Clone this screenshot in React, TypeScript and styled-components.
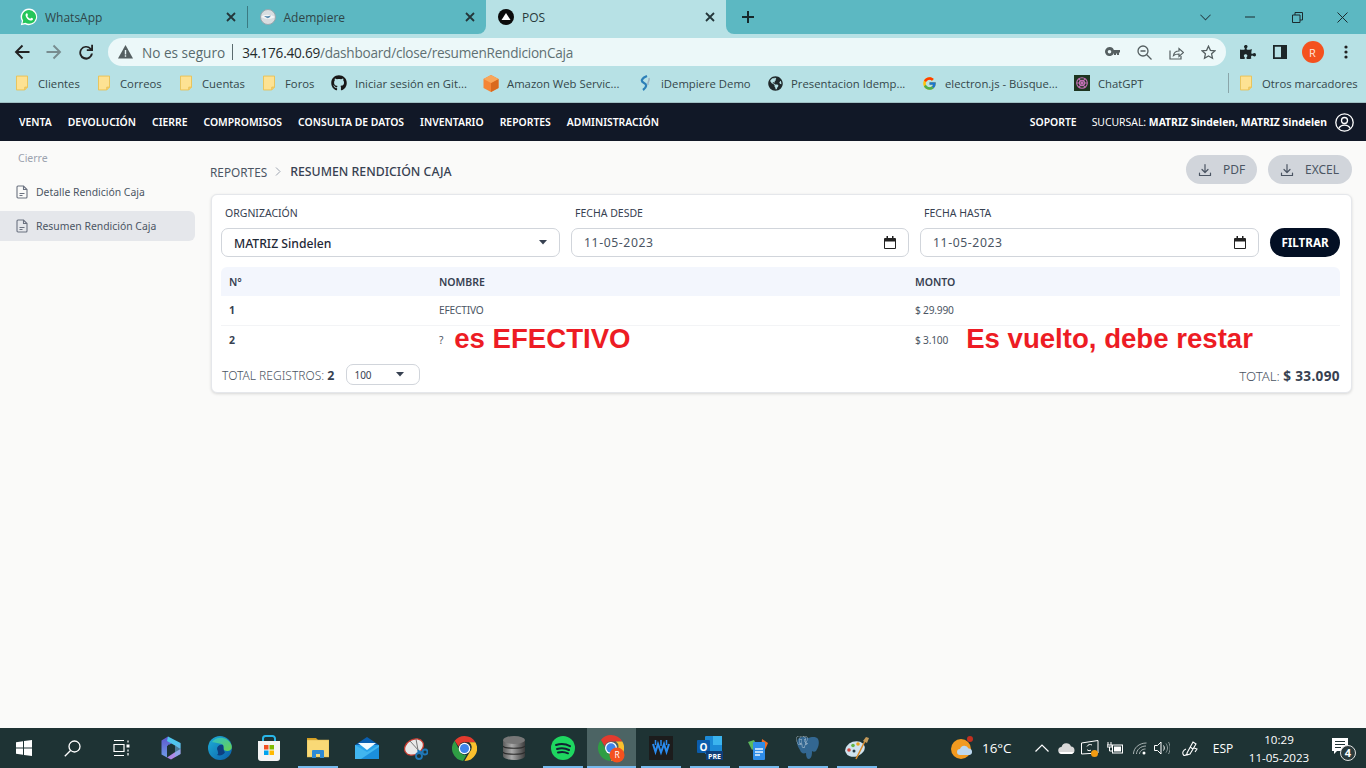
import React from "react";
import styled, { createGlobalStyle } from "styled-components";
import { FaGithub, FaGlobeAmericas, FaPuzzlePiece } from "react-icons/fa";
import { FcGoogle } from "react-icons/fc";
import { SiPostgresql } from "react-icons/si";

const Global = createGlobalStyle`
  html, body { margin: 0; padding: 0; width: 1366px; height: 768px; overflow: hidden; background: #fafaf9; }
  * { box-sizing: border-box; }
  #root { width: 1366px; height: 768px; }
`;

const Screen = styled.div`
  width: 1366px; height: 768px; display: flex; flex-direction: column;
  font-family: "Noto Sans", "Open Sans", sans-serif;
`;

/* ---------- browser chrome ---------- */
const TabStrip = styled.div`
  height: 34px; display: flex; background: #b7e1e5; flex: none;
`;
const TabsBack = styled.div`
  width: 486px; background: #5cb8c2; border-bottom-right-radius: 8px; display: flex; padding-left: 8px;
`;
const Tab = styled.div<{ $gap: number }>`
  width: 239px; height: 34px; display: flex; align-items: center; padding: 0 11px 0 12px; gap: ${(p) => p.$gap}px;
  font: 12px "Open Sans", sans-serif; color: #2f4548; position: relative;
`;
const TabTitle = styled.span`flex: 1;`;
const TabDivider = styled.div`width: 1px; height: 22px; margin-top: 6px; background: #3b7a82; flex: none;`;
const ActiveTab = styled(Tab)`
  width: 240px; flex: none; background: #b7e1e5; border-radius: 8px 8px 0 0; padding: 0 11px 0 12px; color: #27393b;
`;
const StripRest = styled.div`
  flex: 1; background: #5cb8c2; border-bottom-left-radius: 8px; display: flex; align-items: center;
  padding-left: 15px; position: relative;
`;
const WinButtons = styled.div`
  margin-left: auto; display: flex; align-items: center; height: 28px;
`;
const WinBtn = styled.div<{ $w: number }>`
  width: ${(p) => p.$w}px; display: flex; justify-content: center; align-items: center; height: 28px;
`;

const Toolbar = styled.div`
  height: 32px; background: #b7e1e5; display: flex; align-items: flex-end; flex: none;
`;
const NavIcons = styled.div`
  display: flex; width: 108px; height: 28px; align-items: center; padding-left: 14px; gap: 16px;
`;
const Omnibox = styled.div`
  width: 1118px; height: 28px; background: #ecf8f9; border-radius: 14px; display: flex; align-items: center;
  padding-left: 10px; font: 13.6px "Open Sans", sans-serif; color: #586a6d; flex: none;
`;
const Insecure = styled.span`margin-left: 9px; white-space: nowrap;`;
const OmniSep = styled.span`width: 1px; height: 16px; background: #5b6b6e; margin: 0 9px 0 7px;`;
const Url = styled.span`white-space: nowrap; color: #5f7073; letter-spacing: -.24px;`;
const Host = styled.span`color: #1f2a2c;`;
const OmniActions = styled.div`margin-left: auto; display: flex; align-items: center; gap: 17px; padding-right: 10px;`;
const ExtIcons = styled.div`
  display: flex; align-items: center; height: 28px; margin-left: 5px;
`;
const ExtSlot = styled.div<{ $w: number }>`width: ${(p) => p.$w}px; display: flex; justify-content: center; align-items: center; flex: none;`;
const Avatar = styled.div`
  width: 22px; height: 22px; border-radius: 50%; background: #f4511e; color: #ffe5dc;
  font: 11px "Open Sans", sans-serif; display: flex; align-items: center; justify-content: center;
`;

const BookmarkBar = styled.div`
  height: 37px; background: #b7e1e5; border-bottom: 1px solid #9fbfc3; flex: none; display: flex; align-items: center;
  padding: 0 10px 2px 14px; font: 11.3px "Open Sans", sans-serif; color: #34474a;
`;
const Bookmark = styled.div<{ $w: number }>`
  width: ${(p) => p.$w}px; flex: none; display: flex; align-items: center; gap: 8px; white-space: nowrap;
`;
const BookmarkIcon = styled.div`width: 16px; height: 16px; flex: none; display: flex; justify-content: center; align-items: center;`;
const BookmarkSep = styled.div`width: 1px; height: 20px; background: #8aa5a9; margin: 0 9px 0 auto;`;

/* ---------- app nav ---------- */
const AppNav = styled.nav`
  height: 38px; background: #111827; flex: none; display: flex; align-items: center; padding: 0 12px 0 19px;
  color: #fff; font-size: 10.4px; font-weight: 600;
`;
const NavItem = styled.span`margin-right: 16px; white-space: nowrap;`;
const NavRight = styled.div`margin-left: auto; display: flex; align-items: center; gap: 15px;`;
const Branch = styled.span`font-weight: 400; white-space: nowrap; margin-right: -7px; b { font-weight: 700; }`;

/* ---------- page ---------- */
const Body = styled.div`flex: 1; display: flex; background: #fafaf9; min-height: 0;`;
const Sidebar = styled.aside`width: 195px; flex: none; padding-top: 10px; display: flex; flex-direction: column; gap: 4px;`;
const SideTitle = styled.div`
  height: 22px; padding-left: 18px; font-size: 10.5px; color: #9ca3af; line-height: 14px;
`;
const SideItem = styled.div<{ $active?: boolean }>`
  height: 30px; display: flex; align-items: center; gap: 8px; padding-left: 16px; font-size: 10.4px; color: #4b5563;
  background: ${(p) => (p.$active ? "#e5e7eb" : "transparent")};
  border-radius: 0 6px 6px 0; white-space: nowrap;
`;
const Main = styled.main`flex: 1; padding: 14px 14px 0 16px; min-width: 0;`;
const TitleRow = styled.div`display: flex; align-items: center; height: 29px; margin-bottom: 10px;`;
const Crumbs = styled.div`display: flex; align-items: center; font-size: 11.8px; color: #4b5563; white-space: nowrap; margin: 4px 0 0 -1px;`;
const CrumbCurrent = styled.span`font-size: 12.3px; font-weight: 500; color: #374151;`;
const CrumbSep = styled.span`margin: 0 9px 0 8px; display: flex;`;
const Actions = styled.div`margin-left: auto; display: flex; gap: 11px;`;
const GhostButton = styled.div<{ $w: number }>`
  width: ${(p) => p.$w}px; height: 29px; border-radius: 15px; background: #d1d5db; color: #4b5563; font-size: 12px;
  display: flex; align-items: center; padding-left: 12px; gap: 11px;
`;
const Card = styled.section`
  height: 199px; background: #fff; border: 1px solid #e5e7eb; border-radius: 6px;
  box-shadow: 0 1px 3px rgba(0,0,0,.14); padding: 0 11px 0 9px; display: flex; flex-direction: column;
`;
const Filters = styled.div`
  display: grid; grid-template-columns: 339px 338px 339px 70px; column-gap: 11px; height: 72px; align-items: end; flex: none; padding-bottom: 10px;
`;
const Field = styled.div`display: flex; flex-direction: column; min-width: 0;`;
const FieldLabel = styled.label`
  font-size: 10.5px; color: #374151; height: 15px; line-height: 15px; margin: 0 0 7px 4px; white-space: nowrap;
`;
const InputBox = styled.div`
  height: 29px; border: 1px solid #d1d5db; border-radius: 7px; background: #fff; display: flex; align-items: center;
  padding: 0 12px; font-size: 12.2px; color: #374151; justify-content: space-between;
`;
const SelectText = styled.span`font-size: 12.2px; font-weight: 500; color: #1f2937; padding-top: 1px;`;
const DateText = styled.span`letter-spacing: .6px; color: #4b5563;`;
const Filter = styled.div`
  height: 29px; border-radius: 15px; background: #030f24; color: #fff; font-size: 11.6px; font-weight: 700;
  display: flex; align-items: center; justify-content: center;
`;
const Table = styled.table`width: 100%; border-collapse: collapse; table-layout: fixed; flex: none;`;
const Th = styled.th<{ $w?: number }>`
  width: ${(p) => (p.$w ? `${p.$w}px` : "auto")}; height: 29px; background: #f3f6fd; text-align: left; padding: 0 0 0 8px;
  font-size: 10.5px; font-weight: 600; color: #374151;
  &:first-child { border-top-left-radius: 6px; } &:last-child { border-top-right-radius: 6px; }
`;
const Tr = styled.tr`border-bottom: 1px solid #f3f4f6; &:last-child { border-bottom: 0; }`;
const IdCell = styled.td`height: 29px; padding: 0 0 0 8px; font-size: 10.5px; font-weight: 700; color: #374151;`;
const Td = styled.td`height: 29px; padding: 0 0 0 8px; font-size: 10.2px; color: #4b5563;`;
const CellLine = styled.div`display: flex; align-items: center; height: 20px; white-space: nowrap; letter-spacing: -.2px;`;
const Note = styled.span<{ $gap: number }>`
  margin: -2px 0 0 ${(p) => p.$gap}px; font: bold 27.6px "Liberation Sans", Arial, sans-serif; color: #ed1c24; letter-spacing: 0;
`;
const Foot = styled.div`
  display: flex; align-items: center; height: 21px; margin-top: 10px; padding-left: 1px; font-size: 12px; color: #4b5563;
`;
const FootLabel = styled.span`padding-top: 1px; font-weight: 300;`;
const FootStrong = styled.b`font-weight: 700; color: #374151; font-size: 12.4px;`;
const PageSize = styled.div`
  width: 74px; height: 21px; border: 1px solid #d1d5db; border-radius: 7px; margin-left: 12px; display: flex; align-items: center;
  justify-content: space-between; padding: 0 15px 0 7px; font-size: 10px; color: #374151;
`;
const Total = styled.div`
  margin-left: auto; padding-top: 1px; font-weight: 300; font-size: 13.2px; color: #4b5563;
  b { font-weight: 700; color: #374151; font-size: 13.6px; letter-spacing: .35px; }
`;

/* ---------- taskbar ---------- */
const Taskbar = styled.footer`
  height: 40px; flex: none; background: #1e3334; display: flex; color: #fff; font: 12px "Open Sans", sans-serif; position: relative;
`;
const Slot = styled.div<{ $w?: number; $active?: boolean; $open?: boolean }>`
  width: ${(p) => p.$w ?? 49}px; height: 40px; flex: none; display: flex; align-items: center; justify-content: center; position: relative;
  background: ${(p) => (p.$active ? "#4c6464" : "transparent")};
  &::after {
    content: ""; display: ${(p) => (p.$open ? "block" : "none")}; position: absolute; bottom: 0; height: 2px;
    left: ${(p) => (p.$active ? 0 : 5)}px; right: ${(p) => (p.$active ? 0 : 4)}px; background: #76b9ed;
  }
`;
const Tray = styled.div`margin-left: auto; display: flex; align-items: center; height: 40px;`;
const TrayIcon = styled.div<{ $w: number }>`width: ${(p) => p.$w}px; display: flex; justify-content: center; align-items: center; height: 40px; flex: none;`;
const Weather = styled.span`font-size: 13.4px; width: 51px; white-space: nowrap; padding-left: 3px;`;
const Clock = styled.div`width: 82px; text-align: center; line-height: 18px; font-size: 11.6px; padding-top: 1px;`;

/* ---------- drawings ---------- */
const Folder = () => (
  <svg width="12" height="16" viewBox="0 0 13 16"><path d="M.5.5h12v12l-3 3H.5z" fill="#fde293" stroke="#e9c053" /><path d="M9.5 15.5v-3h3" fill="#f3cf6c" stroke="#e9c053" /></svg>
);
const DocIcon = () => (
  <svg width="12" height="14" viewBox="0 0 12 14" fill="none" stroke="#6b7280" strokeWidth="1.1"><path d="M1 2a1 1 0 0 1 1-1h5.500L11 4.500V12a1 1 0 0 1-1 1H2a1 1 0 0 1-1-1z" /><path d="M7.500 1v3.500H11M3.500 8.500h5M3.500 10.500h3" /></svg>
);
const Download = () => (
  <svg width="14" height="14" viewBox="0 0 14 14" fill="none" stroke="#4b5563" strokeWidth="1.2" strokeLinecap="round" strokeLinejoin="round"><path d="M7 1.500v7.500M4 6.500L7 9.500l3-3M1.500 10v2.500h11V10" /></svg>
);
const Caret = () => <svg width="8" height="5" viewBox="0 0 8 5"><path d="M0 0h8L4 4.500z" fill="#374151" /></svg>;
const Calendar = () => (
  <svg width="12" height="13" viewBox="0 0 12 13"><path d="M1 2h10a1 1 0 0 1 1 1v9a1 1 0 0 1-1 1H1a1 1 0 0 1-1-1V3a1 1 0 0 1 1-1zm0 3.500V12h10V5.500z" fill="#222" /><path d="M2.500 0h1.500v3H2.500zM8 0h1.500v3H8z" fill="#222" /></svg>
);
const CloseX = () => (
  <svg width="10" height="10" viewBox="0 0 10 10" stroke="#24363a" strokeWidth="1.8"><path d="M1 1l8 8M9 1l-8 8" /></svg>
);
const WhatsApp = () => (
  <svg width="18" height="18" viewBox="0 0 18 18">
    <path d="M9 .5a8.300 8.300 0 0 0-7.100 12.600L.8 17.300l4.300-1.100A8.300 8.300 0 1 0 9 .5z" fill="#fff" />
    <path d="M9 2a6.900 6.900 0 0 0-5.800 10.600l-.7 2.800 2.900-.7A6.900 6.900 0 1 0 9 2z" fill="#25c65a" />
    <path d="M6.600 5.200c-.9.500-1.200 1.500-.9 2.700.6 2.200 2.500 4 4.500 4.600 1.200.3 2.300-.1 2.700-1 .2-.4.200-.8.100-.9l-1.800-.9c-.2 0-.6.700-.9 1-.2.100-1.900-.7-3-2.500 0-.2.700-.8.700-1.100L7.200 5.300c-.1-.2-.4-.2-.6-.1z" fill="#fff" />
  </svg>
);
const AdempiereFav = () => (
  <svg width="16" height="16" viewBox="0 0 16 16">
    <circle cx="8" cy="8" r="7.500" fill="#d8dde0" /><path d="M1 8c3-3 9-3 14 0-3 2-8 3-14 0z" fill="#f3f5f6" />
    <path d="M4 7c2 0 4 .5 7-.5-1 2-3 3-4 2.500z" fill="#5b8cb0" /><circle cx="8" cy="8" r="7.500" fill="none" stroke="#9aa6ad" />
  </svg>
);
const PosFav = () => (
  <svg width="16" height="16" viewBox="0 0 16 16"><circle cx="8" cy="8" r="8" fill="#0b0b0b" /><path d="M8 4l4.500 7h-9z" fill="#fff" /></svg>
);
const Plus = () => (
  <svg width="14" height="14" viewBox="0 0 14 14" stroke="#16282b" strokeWidth="2"><path d="M7 1v12M1 7h12" /></svg>
);
const Back = ({ c = "#222" }: { c?: string }) => (
  <svg width="16" height="16" viewBox="0 0 16 16" fill="none" stroke={c} strokeWidth="1.9"><path d="M15.500 8H2M8.500 1.500L2 8l6.500 6.500" /></svg>
);
const Forward = () => (
  <svg width="16" height="16" viewBox="0 0 16 16" fill="none" stroke="#788c8f" strokeWidth="1.9"><path d="M.5 8H14M7.500 1.500L14 8l-6.500 6.500" /></svg>
);
const Reload = () => (
  <svg width="16" height="16" viewBox="0 0 16 16"><path d="M13.200 4.300V.8L15 .8V7H8.800V5.200h3.100A5 5 0 1 0 13 9.500h1.900A6.800 6.800 0 1 1 13.200 4.300z" fill="#222" /></svg>
);
const Warn = () => (
  <svg width="15" height="14" viewBox="0 0 15 14"><path d="M7.500 0L15 13.500H0z" fill="#555f61" /><path d="M6.800 5h1.400v4.500H6.800zM6.800 10.300h1.400v1.400H6.800z" fill="#ecf8f9" /></svg>
);
const KeyIcon = () => (
  <svg width="15" height="10" viewBox="0 0 15 10"><path d="M4.500 0a4.500 4.500 0 1 1-4.200 6 4.500 4.500 0 0 1 4.200-6zm0 3a1.800 1.800 0 1 0 0 3.600 1.800 1.800 0 0 0 0-3.600z" fill="#555f61" fillRule="evenodd" /><path d="M8 3h7v2.500h-1V8h-2V6.500h-1V8H9V5.500H8z" fill="#555f61" /></svg>
);
const ZoomOut = () => (
  <svg width="15" height="15" viewBox="0 0 15 15" fill="none" stroke="#555f61" strokeWidth="1.300"><circle cx="6" cy="6" r="5" /><path d="M9.800 9.800L14.500 14.500M3.500 6h5" /></svg>
);
const Share = () => (
  <svg width="15" height="15" viewBox="0 0 15 15" fill="none" stroke="#555f61" strokeWidth="1.200"><path d="M1 5.500V14h11v-3" /><path d="M4.500 10.500c.5-3 3-4.500 5.500-4.500V3.500l4.500 4-4.500 4V9c-2 0-4 .300-5.500 1.500z" /></svg>
);
const Star = () => (
  <svg width="15" height="15" viewBox="0 0 15 15" fill="none" stroke="#555f61" strokeWidth="1.300"><path d="M7.500 1.200l1.900 4.100 4.500.5-3.300 3 .9 4.500-4-2.300-4 2.300.9-4.500-3.300-3 4.500-.5z" /></svg>
);
const SidePanel = () => (
  <svg width="14" height="14" viewBox="0 0 14 14"><path d="M0 0h14v14H0zM1.800 1.800v10.400H8V1.800z" fill="#1c2628" fillRule="evenodd" /></svg>
);
const Dots = () => (
  <svg width="4" height="14" viewBox="0 0 4 14" fill="#222"><circle cx="2" cy="2" r="1.600" /><circle cx="2" cy="7" r="1.600" /><circle cx="2" cy="12" r="1.600" /></svg>
);
const Cube = () => (
  <svg width="16" height="17" viewBox="0 0 16 17"><path d="M8 0l7.500 4v9L8 17 .5 13V4z" fill="#f58536" /><path d="M8 8l7.500-4v9L8 17z" fill="#d9691e" /><path d="M8 0l7.500 4L8 8 .5 4z" fill="#f9a65a" /></svg>
);
const IDempiere = () => (
  <svg width="14" height="16" viewBox="0 0 14 16" fill="none"><path d="M9 1C4 3 2 6 6 8c3 1.500 3 4-1 7" stroke="#2c7fb8" strokeWidth="2.200" /><path d="M11 3c1 3-2 4-1 7" stroke="#9fb4c2" strokeWidth="1.600" /></svg>
);
const ChatGpt = () => (
  <svg width="16" height="16" viewBox="0 0 16 16"><rect width="16" height="16" fill="#1d3520" /><g fill="none" stroke="#c46fb5" strokeWidth="1.100"><circle cx="8" cy="8" r="5.300" /><circle cx="8" cy="8" r="2.600" /><path d="M5 3.500l6 9M11 3.500l-6 9M2.700 8h10.600" /></g></svg>
);
const UserCircle = () => (
  <svg width="19" height="19" viewBox="0 0 19 19" fill="none" stroke="#fff" strokeWidth="1.300"><circle cx="9.500" cy="9.500" r="8.700" /><circle cx="9.500" cy="7.500" r="3" /><path d="M3.800 15.500c1.200-2.500 3.500-3.300 5.700-3.300s4.500.8 5.700 3.300" /></svg>
);
const ChromeLogo = ({ size = 26 }: { size?: number }) => (
  <svg width={size} height={size} viewBox="0 0 26 26">
    <path d="M13 0a13 13 0 0 1 11.300 6.500H13a6.500 6.500 0 0 0-6.200 4.500L2.800 5A13 13 0 0 1 13 0z" fill="#e33b2e" />
    <path d="M24.300 6.500A13 13 0 0 1 13 26l5.600-9.700a6.500 6.500 0 0 0-.7-9.800z" fill="#fbc02d" />
    <path d="M2.800 5l5.600 11.300a6.500 6.500 0 0 0 6.800 3.300L11.500 25.900A13 13 0 0 1 2.800 5z" fill="#2f9e44" />
    <circle cx="13" cy="13" r="6" fill="#fff" /><circle cx="13" cy="13" r="4.700" fill="#3f84ea" />
  </svg>
);
const WinLogo = () => (
  <svg width="16" height="16" viewBox="0 0 16 16" fill="#fff"><path d="M0 2.200L7 1.200v6.300H0zM8 1L16 0v7.500H8zM0 8.500h7v6.300L0 13.800zM8 8.500h8V16L8 15z" /></svg>
);
const Search = () => (
  <svg width="17" height="17" viewBox="0 0 17 17" fill="none" stroke="#fff" strokeWidth="1.300"><circle cx="10.500" cy="6.500" r="5.500" /><path d="M6.500 10.500L.8 16.300" /></svg>
);
const TaskView = () => (
  <svg width="17" height="16" viewBox="0 0 17 16" fill="none" stroke="#fff" strokeWidth="1.200"><path d="M1 .5h10M1 15.500h10M1 4.500h10v7H1z" /><path d="M15 .5v2M15 13v2.500" /><rect x="13.500" y="4.500" width="3" height="3" fill="#fff" stroke="none" /><path d="M15 9.500v2" /></svg>
);
const Copilot = () => (
  <svg width="20" height="24" viewBox="0 0 20 24">
    <defs>
      <linearGradient id="cpa" x1="0" y1="0" x2="0" y2="1"><stop offset="0" stopColor="#5d55cf" /><stop offset="1" stopColor="#6f9be6" /></linearGradient>
      <linearGradient id="cpb" x1="0" y1="0" x2="1" y2="0"><stop offset="0" stopColor="#a680e2" /><stop offset="1" stopColor="#b995ea" /></linearGradient>
    </defs>
    <path d="M7 0.500L0.500 4.500v14L6 21.500V10l6-3.500z" fill="url(#cpa)" />
    <path d="M7 0.500L19.500 7v6L14 9.500 6 5z" fill="#4fc6ee" />
    <path d="M6 21.500L10 23.500l9.500-5.500V13l-6 3.500-7.500 5z" fill="url(#cpb)" />
    <path d="M19.500 7v11l-5.500 3V9.500z" fill="#6fb6ea" opacity=".55" />
    <path d="M7 8.500l7 3.500-7 3.800z" fill="#1e3334" />
  </svg>
);
const Edge = () => (
  <svg width="24" height="24" viewBox="0 0 24 24">
    <defs>
      <linearGradient id="eb" x1="0" y1="0" x2="1" y2="1"><stop offset="0" stopColor="#1fb0d8" /><stop offset="1" stopColor="#0a5da8" /></linearGradient>
      <linearGradient id="eg" x1="0" y1="0" x2="1" y2="1"><stop offset="0" stopColor="#2fc0c8" /><stop offset="1" stopColor="#6ad14e" /></linearGradient>
    </defs>
    <circle cx="12" cy="12" r="12" fill="url(#eb)" />
    <path d="M4 6c4-6 15-6 19 2 1.500 3 1 6.500-3 7-3 .3-5-1-4.500-3 .2-1.500 0-4-4-4.500C8 7 5 6 4 6z" fill="url(#eg)" />
    <path d="M9 13c0-3 3-5 6-4 1 2 0 6 2 7-1 3-5 4-8 3 2-1 1-3 0-6z" fill="#0d3f80" />
  </svg>
);
const Store = () => (
  <svg width="24" height="26" viewBox="0 0 24 26">
    <path d="M6 7V3.500A2.500 2.500 0 0 1 8.500 1h7A2.500 2.500 0 0 1 18 3.500V7" fill="none" stroke="#29b6e8" strokeWidth="2" />
    <path d="M1 6h22v17a3 3 0 0 1-3 3H4a3 3 0 0 1-3-3z" fill="#f4f4f4" />
    <rect x="7" y="10" width="4.500" height="4.500" fill="#f25022" /><rect x="12.500" y="10" width="4.500" height="4.500" fill="#7fba00" />
    <rect x="7" y="15.500" width="4.500" height="4.500" fill="#00a4ef" /><rect x="12.500" y="15.500" width="4.500" height="4.500" fill="#ffb900" />
  </svg>
);
const Explorer = () => (
  <svg width="22" height="20" viewBox="0 0 22 20">
    <path d="M0 0h9l2 2h0v6H0z" fill="#d49f22" /><rect y="2" width="22" height="17" fill="#f9d976" stroke="#e0b84f" strokeWidth=".5" />
    <path d="M5 20v-7a1 1 0 0 1 1-1h10a1 1 0 0 1 1 1v7h-4v-4H9v4z" fill="#2f8ad4" />
  </svg>
);
const Mail = () => (
  <svg width="24" height="22" viewBox="0 0 24 22">
    <path d="M12 0l12 8v2H0V8z" fill="#0a5fb0" /><rect y="8" width="24" height="14" fill="#29a3ea" />
    <path d="M0 8l12 7 12-7v14H0z" fill="#41b6f0" /><path d="M3 6h18l-9 7z" fill="#f2fbff" /><path d="M24 10v12H6z" fill="#1b8fdc" />
  </svg>
);
const Snip = () => (
  <svg width="24" height="24" viewBox="0 0 24 24">
    <ellipse cx="10" cy="11" rx="10" ry="7.500" transform="rotate(-30 10 11)" fill="#e9e9e9" stroke="#c2392f" strokeWidth="1.300" />
    <path d="M12 3l2 11M6 5l9 10" stroke="#777" strokeWidth="1" />
    <circle cx="15" cy="20" r="3" fill="none" stroke="#1f77b8" strokeWidth="1.800" /><circle cx="21" cy="16" r="2.500" fill="none" stroke="#1f77b8" strokeWidth="1.800" />
    <path d="M14 14l1 4M15 15l4 2" stroke="#1f77b8" strokeWidth="1.800" />
  </svg>
);
const Database = () => (
  <svg width="22" height="24" viewBox="0 0 22 24">
    <defs><linearGradient id="db" x1="0" x2="1" y1="0" y2="0"><stop offset="0" stopColor="#5b5b5b" /><stop offset=".4" stopColor="#aaa" /><stop offset="1" stopColor="#3c3c3c" /></linearGradient></defs>
    <path d="M0 4v16c0 2 5 4 11 4s11-2 11-4V4z" fill="url(#db)" /><ellipse cx="11" cy="4" rx="11" ry="4" fill="#777" />
    <path d="M0 10c2 3 20 3 22 0M0 16c2 3 20 3 22 0" stroke="#2c2c2c" fill="none" strokeWidth="1.200" />
  </svg>
);
const Spotify = () => (
  <svg width="24" height="24" viewBox="0 0 24 24"><circle cx="12" cy="12" r="12" fill="#1ed760" /><g fill="none" stroke="#123" strokeWidth="2" strokeLinecap="round"><path d="M5 9c5-1.500 10-1 14 1.200" /><path d="M6 13c4.500-1.200 8.500-.8 12 1" /><path d="M7 16.500c3.500-1 7-.7 10 .8" /></g></svg>
);
const ChromeProfile = () => (
  <svg width="26" height="26" viewBox="0 0 26 26" overflow="visible"><circle cx="19" cy="20" r="7.500" fill="#f4511e" /><text x="19" y="23" fontSize="8.500" fill="#fff" textAnchor="middle" fontFamily="Open Sans">R</text></svg>
);
const ChromeStack = styled.div`position: relative; width: 26px; height: 26px; display: flex; margin: -1px 0 0 -1px;`;
const StackOverlay = styled.div`position: absolute; inset: 0;`;
const Waves = () => (
  <svg width="24" height="24" viewBox="0 0 24 24"><rect width="24" height="24" fill="#1c1c1c" /><path d="M4 8l2.500 8L9 8l3 8.500L15 8l2.500 8L20 8" fill="none" stroke="#2a8cf0" strokeWidth="2" /><path d="M6.500 4v5M12 4v6M17.500 4v5" stroke="#2a8cf0" strokeWidth="1.500" /></svg>
);
const Outlook = () => (
  <svg width="26" height="24" viewBox="0 0 26 24">
    <rect x="8" y="0" width="17" height="18" rx="1" fill="#1c8ad6" /><rect x="16" y="0" width="9" height="9" fill="#3bb4ee" />
    <rect x="0" y="4" width="13" height="13" rx="1" fill="#0b5cab" /><text x="6.500" y="14.500" fontSize="10" fontWeight="700" fill="#fff" textAnchor="middle" fontFamily="Open Sans">O</text>
    <rect x="9" y="15" width="17" height="9" fill="#0e3d78" /><text x="17.500" y="22.500" fontSize="7" fontWeight="700" fill="#fff" textAnchor="middle" fontFamily="Open Sans">PRE</text>
  </svg>
);
const DocsApp = () => (
  <svg width="24" height="24" viewBox="0 0 24 24">
    <path d="M1 6l6-2 3 6-5 4z" fill="#5cb85c" /><path d="M15 3l6 4-4 9-3-2z" fill="#f26b21" />
    <rect x="6" y="6" width="12" height="18" rx="1" fill="#2f8de8" /><path d="M8 13h8M8 16h8M8 19h5" stroke="#e6f3ff" strokeWidth="1.300" />
  </svg>
);
const Postgres = () => (
  <svg width="24" height="24" viewBox="0 0 24 24">
    <path d="M2 3C5 0 10 1 12 2c3-1 8-2 10 1 2 4 0 9-2 12-1 1-3 1-4 0 0 3 0 7-3 8-2 0-3-2-3-6-3 1-5 0-6-3C2 11 0 7 2 3z" fill="#336791" />
    <SiPostgresql x={0} y={0} width={24} height={24} color="#c3d3df" />
  </svg>
);
const Palette = () => (
  <svg width="24" height="24" viewBox="0 0 24 24">
    <ellipse cx="10" cy="13" rx="10" ry="7.500" transform="rotate(-18 10 13)" fill="#cfe2ee" />
    <circle cx="4" cy="14" r="1.800" fill="#d5473f" /><circle cx="8" cy="9.500" r="1.800" fill="#62b545" /><circle cx="13" cy="8" r="1.800" fill="#e9a11f" /><circle cx="9" cy="15" r="1.500" fill="#273a44" />
    <path d="M11 23L20 5" stroke="#d98a2b" strokeWidth="1.600" /><path d="M18 5l3-4 3 1-2 5z" fill="#c49a5a" />
  </svg>
);
const WeatherIcon = () => (
  <svg width="24" height="24" viewBox="0 0 24 24" overflow="visible">
    <circle cx="10" cy="13" r="10" fill="#f29a1f" /><circle cx="19" cy="3" r="3" fill="#c2301f" />
    <path d="M9 19a3 3 0 0 1 0-6 4.500 4.500 0 0 1 8.500-.5 3.300 3.300 0 0 1 1 6.500z" fill="#bcd7ee" />
  </svg>
);
const Chevron = ({ c = "#fff", w = 12 }: { c?: string; w?: number }) => (
  <svg width={w} height="7" viewBox="0 0 12 7" fill="none" stroke={c} strokeWidth="1.100"><path d="M.5.500L6 6l5.500-5.500" /></svg>
);
const UpCaret = () => <svg width="14" height="8" viewBox="0 0 14 8" fill="none" stroke="#fff" strokeWidth="1.200"><path d="M.5 7.500L7 1l6.500 6.500" /></svg>;
const OneDrive = () => <svg width="17" height="11" viewBox="0 0 17 11"><path d="M4 11a3.500 3.500 0 0 1-.5-7A5 5 0 0 1 13 3.500 3.800 3.800 0 0 1 13.500 11z" fill="#d8d8d8" /><path d="M1 9h15l-2 2H3z" fill="#fff" /></svg>;
const Capture = () => (
  <svg width="18" height="17" viewBox="0 0 18 17" overflow="visible" fill="none" stroke="#fff"><path d="M.5 3L17 .5V13L.5 14z" strokeWidth="1" /><path d="M6 6.500c1-2 3-2.500 5-1.500M10 10c-1 1-3 1-4-.5" strokeWidth="1" /><circle cx="13.500" cy="13.500" r="3.500" fill="#f39c12" stroke="none" /></svg>
);
const Battery = () => <svg width="16" height="12" viewBox="0 0 16 12" fill="none" stroke="#fff"><path d="M1 0v3M4 0v3M0 3h5v2H0zM2.500 5v4H5" strokeWidth="1" /><rect x="5.500" y="3" width="10" height="8" strokeWidth="1" /><rect x="7" y="4.500" width="7" height="5" fill="#fff" stroke="none" /></svg>;
const Wifi = () => <svg width="14" height="13" viewBox="0 0 14 13" fill="none" stroke="#aab4b4" strokeWidth="1"><path d="M.5 12C.5 6 6 1 13.500 1" /><path d="M3.500 12c0-4 4-8 9.500-8" /><path d="M6.500 12c0-2.500 2.500-5 6-5" /><circle cx="11" cy="11" r="1.500" fill="#fff" stroke="none" /></svg>;
const Speaker = () => <svg width="16" height="14" viewBox="0 0 16 14" fill="none" stroke="#fff"><path d="M.5 4.500h3L7 1v12L3.500 9.500h-3z" strokeWidth="1" /><path d="M9.500 4.500c1 1.500 1 3.500 0 5" strokeWidth="1" /><path d="M12 2.500c2 3 2 6 0 9M14.500 1c2.200 4 2.200 8 0 12" stroke="#8d9999" strokeWidth="1" /></svg>;
const Pen = () => <svg width="17" height="17" viewBox="0 0 17 17" fill="none" stroke="#fff" strokeWidth="1.100"><path d="M5 13l6-11 3 2-6 10-3 1z" /><path d="M8 7l3 2" /><path d="M4 9C1 10 0 13 1.500 15c1.500 1.500 3-.5 4-1" /><path d="M12 8l3 1-2 3" /></svg>;
const Notice = () => (
  <svg width="22" height="20" viewBox="0 0 22 20" overflow="visible">
    <path d="M0 0h16v13H5l-3 3v-3H0z" fill="#fff" /><path d="M3 3.500h10M3 6.500h10M3 9.500h6" stroke="#1e3334" strokeWidth="1" />
    <circle cx="16" cy="15" r="7.500" fill="#2b3b3c" stroke="#e2e2e2" strokeWidth="1" /><text x="16" y="19" fill="#fff" fontSize="11" fontWeight="700" textAnchor="middle" fontFamily="Open Sans">4</text>
  </svg>
);

const navItems = ["VENTA", "DEVOLUCIÓN", "CIERRE", "COMPROMISOS", "CONSULTA DE DATOS", "INVENTARIO", "REPORTES", "ADMINISTRACIÓN"];
const bookmarks: { label: string; w: number; icon: React.ReactNode }[] = [
  { label: "Clientes", w: 82, icon: <Folder /> },
  { label: "Correos", w: 82, icon: <Folder /> },
  { label: "Cuentas", w: 83, icon: <Folder /> },
  { label: "Foros", w: 70, icon: <Folder /> },
  { label: "Iniciar sesión en Git...", w: 152, icon: <FaGithub size={16} color="#181717" /> },
  { label: "Amazon Web Servic...", w: 154, icon: <Cube /> },
  { label: "iDempiere Demo", w: 130, icon: <IDempiere /> },
  { label: "Presentacion Idemp...", w: 154, icon: <FaGlobeAmericas size={15} color="#20292b" /> },
  { label: "electron.js - Búsque...", w: 153, icon: <FcGoogle size={15} /> },
  { label: "ChatGPT", w: 80, icon: <ChatGpt /> },
];

const App = () => (
  <Screen>
    <Global />
    <TabStrip>
      <TabsBack>
        <Tab $gap={7}><WhatsApp /><TabTitle>WhatsApp</TabTitle><CloseX /></Tab>
        <TabDivider />
        <Tab $gap={8}><AdempiereFav /><TabTitle>Adempiere</TabTitle><CloseX /></Tab>
      </TabsBack>
      <ActiveTab $gap={8}><PosFav /><TabTitle>POS</TabTitle><CloseX /></ActiveTab>
      <StripRest>
        <Plus />
        <WinButtons>
          <WinBtn $w={38}><Chevron c="#28424a" w={11} /></WinBtn>
          <WinBtn $w={52}><svg width="10" height="2"><path d="M0 1h10" stroke="#1b2b2e" /></svg></WinBtn>
          <WinBtn $w={42}><svg width="11" height="11" viewBox="0 0 11 11" fill="none" stroke="#1b2b2e"><path d="M.5 3h7.500v7.500H.5zM3 3V.5h7.500V8H8" /></svg></WinBtn>
          <WinBtn $w={48}><svg width="11" height="11" viewBox="0 0 11 11" stroke="#1b2b2e"><path d="M.5.5l10 10M10.500.5l-10 10" /></svg></WinBtn>
        </WinButtons>
      </StripRest>
    </TabStrip>
    <Toolbar>
      <NavIcons>
        <Back />
        <Forward />
        <Reload />
      </NavIcons>
      <Omnibox>
        <Warn />
        <Insecure>No es seguro</Insecure>
        <OmniSep />
        <Url><Host>34.176.40.69</Host>/dashboard/close/resumenRendicionCaja</Url>
        <OmniActions><KeyIcon /><ZoomOut /><Share /><Star /></OmniActions>
      </Omnibox>
      <ExtIcons>
        <ExtSlot $w={33}><FaPuzzlePiece size={16} color="#1c2628" /></ExtSlot>
        <ExtSlot $w={32}><SidePanel /></ExtSlot>
        <ExtSlot $w={33}><Avatar>R</Avatar></ExtSlot>
        <ExtSlot $w={33}><Dots /></ExtSlot>
      </ExtIcons>
    </Toolbar>
    <BookmarkBar>
      {bookmarks.map((b) => (
        <Bookmark key={b.label} $w={b.w}><BookmarkIcon>{b.icon}</BookmarkIcon>{b.label}</Bookmark>
      ))}
      <BookmarkSep />
      <Bookmark $w={118}><BookmarkIcon><Folder /></BookmarkIcon>Otros marcadores</Bookmark>
    </BookmarkBar>
    <AppNav>
      {navItems.map((n) => <NavItem key={n}>{n}</NavItem>)}
      <NavRight>
        <span>SOPORTE</span>
        <Branch>SUCURSAL: <b>MATRIZ Sindelen, MATRIZ Sindelen</b></Branch>
        <UserCircle />
      </NavRight>
    </AppNav>
    <Body>
      <Sidebar>
        <SideTitle>Cierre</SideTitle>
        <SideItem><DocIcon />Detalle Rendición Caja</SideItem>
        <SideItem $active><DocIcon />Resumen Rendición Caja</SideItem>
      </Sidebar>
      <Main>
        <TitleRow>
          <Crumbs>
            <span>REPORTES</span>
            <CrumbSep><svg width="6" height="9" viewBox="0 0 6 9" fill="none" stroke="#9ca3af"><path d="M1 .5l4 4-4 4" /></svg></CrumbSep>
            <CrumbCurrent>RESUMEN RENDICIÓN CAJA</CrumbCurrent>
          </Crumbs>
          <Actions>
            <GhostButton $w={71}><Download />PDF</GhostButton>
            <GhostButton $w={84}><Download />EXCEL</GhostButton>
          </Actions>
        </TitleRow>
        <Card>
          <Filters>
            <Field>
              <FieldLabel>ORGNIZACIÓN</FieldLabel>
              <InputBox><SelectText>MATRIZ Sindelen</SelectText><Caret /></InputBox>
            </Field>
            <Field>
              <FieldLabel>FECHA DESDE</FieldLabel>
              <InputBox><DateText>11-05-2023</DateText><Calendar /></InputBox>
            </Field>
            <Field>
              <FieldLabel>FECHA HASTA</FieldLabel>
              <InputBox><DateText>11-05-2023</DateText><Calendar /></InputBox>
            </Field>
            <Filter>FILTRAR</Filter>
          </Filters>
          <Table>
            <thead>
              <tr><Th $w={210}>N°</Th><Th $w={476}>NOMBRE</Th><Th>MONTO</Th></tr>
            </thead>
            <tbody>
              <Tr>
                <IdCell>1</IdCell>
                <Td><CellLine>EFECTIVO</CellLine></Td>
                <Td><CellLine>$ 29.990</CellLine></Td>
              </Tr>
              <Tr>
                <IdCell>2</IdCell>
                <Td><CellLine>?<Note $gap={11}>es EFECTIVO</Note></CellLine></Td>
                <Td><CellLine>$ 3.100<Note $gap={18}>Es vuelto, debe restar</Note></CellLine></Td>
              </Tr>
            </tbody>
          </Table>
          <Foot>
            <FootLabel>TOTAL REGISTROS: <FootStrong>2</FootStrong></FootLabel>
            <PageSize>100<Caret /></PageSize>
            <Total>TOTAL: <b>$ 33.090</b></Total>
          </Foot>
        </Card>
      </Main>
    </Body>
    <Taskbar>
      <Slot $w={48}><WinLogo /></Slot>
      <Slot $w={48}><Search /></Slot>
      <Slot $w={50}><TaskView /></Slot>
      <Slot><Copilot /></Slot>
      <Slot><Edge /></Slot>
      <Slot><Store /></Slot>
      <Slot $open><Explorer /></Slot>
      <Slot><Mail /></Slot>
      <Slot><Snip /></Slot>
      <Slot><ChromeLogo size={25} /></Slot>
      <Slot><Database /></Slot>
      <Slot $open><Spotify /></Slot>
      <Slot $open $active>
        <ChromeStack><ChromeLogo /><StackOverlay><ChromeProfile /></StackOverlay></ChromeStack>
      </Slot>
      <Slot $open><Waves /></Slot>
      <Slot $open><Outlook /></Slot>
      <Slot $open><DocsApp /></Slot>
      <Slot $open><Postgres /></Slot>
      <Slot $open><Palette /></Slot>
      <Tray>
        <TrayIcon $w={32}><WeatherIcon /></TrayIcon>
        <Weather>16°C</Weather>
        <TrayIcon $w={24}><UpCaret /></TrayIcon>
        <TrayIcon $w={24}><OneDrive /></TrayIcon>
        <TrayIcon $w={24}><Capture /></TrayIcon>
        <TrayIcon $w={26}><Battery /></TrayIcon>
        <TrayIcon $w={24}><Wifi /></TrayIcon>
        <TrayIcon $w={20}><Speaker /></TrayIcon>
        <TrayIcon $w={36}><Pen /></TrayIcon>
        <TrayIcon $w={30}>ESP</TrayIcon>
        <Clock>10:29<br />11-05-2023</Clock>
        <TrayIcon $w={46}><Notice /></TrayIcon>
      </Tray>
    </Taskbar>
  </Screen>
);

export default App;
